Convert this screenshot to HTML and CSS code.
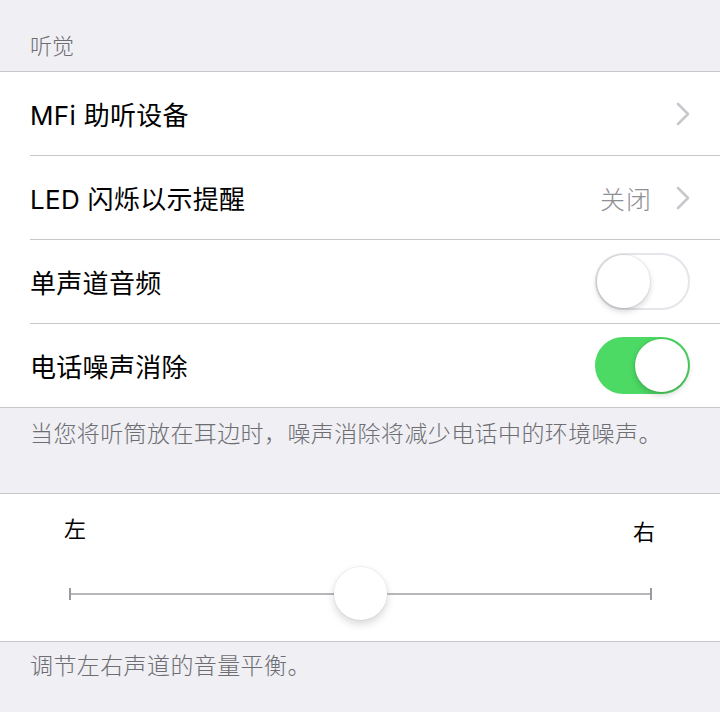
FILE: index.html
```html
<!DOCTYPE html>
<html>
<head>
    <meta charset="utf-8">
    <title>听觉</title>
    <link rel="stylesheet" href="styles.css">
</head>
<body>
    <div class="section-header">听觉</div>

    <div class="group">
        <div class="row">
            <span class="row-title">MFi 助听设备</span>
            <span class="row-detail">
                <svg class="chevron" viewBox="0 0 14 24"><path d="M2 2 L12 12 L2 22" /></svg>
            </span>
        </div>
        <div class="row">
            <span class="row-title">LED 闪烁以示提醒</span>
            <span class="row-detail">
                <span class="row-value">关闭</span>
                <svg class="chevron" viewBox="0 0 14 24"><path d="M2 2 L12 12 L2 22" /></svg>
            </span>
        </div>
        <div class="row">
            <span class="row-title">单声道音频</span>
            <span class="switch"><span class="knob"></span></span>
        </div>
        <div class="row">
            <span class="row-title">电话噪声消除</span>
            <span class="switch on"><span class="knob"></span></span>
        </div>
    </div>

    <div class="section-footer">当您将听筒放在耳边时，噪声消除将减少电话中的环境噪声。</div>

    <div class="group balance">
        <div class="balance-labels">
            <span>左</span>
            <span class="right-label">右</span>
        </div>
        <div class="slider">
            <span class="tick"></span>
            <span class="track"></span>
            <span class="thumb"></span>
            <span class="track"></span>
            <span class="tick"></span>
        </div>
    </div>

    <div class="section-footer last">调节左右声道的音量平衡。</div>
</body>
</html>
```

FILE: styles.css
```css
body {
    margin: 0;
    width: 720px;
    height: 712px;
    overflow: hidden;
    background-color: #efeff4;
    font-family: Inter, "Noto Sans CJK SC", sans-serif;
    color: #000;
}

.section-header {
    font-size: 22px;
    line-height: 28px;
    font-weight: 300;
    color: #6d6d72;
    padding: 32px 30px 11px 30px;
}

.group {
    background-color: #fff;
    border-top: 1px solid #c8c7cc;
    border-bottom: 1px solid #c8c7cc;
}

.row {
    height: 84px;
    box-sizing: border-box;
    margin-left: 30px;
    padding-right: 30px;
    display: flex;
    align-items: center;
    justify-content: space-between;
    border-bottom: 1px solid #c8c7cc;
}

.row:last-child {
    border-bottom: none;
    height: 83px;
}

.row-title {
    font-size: 26px;
    letter-spacing: 0.3px;
}

.row-detail {
    display: flex;
    align-items: center;
    gap: 24px;
}

.row-value {
    font-size: 25px;
    font-weight: 300;
    color: #8e8e93;
    letter-spacing: 1px;
}

.chevron {
    width: 14px;
    height: 24px;
    fill: none;
    stroke: #c7c7cc;
    stroke-width: 2.6;
    stroke-linecap: round;
    stroke-linejoin: round;
}

.switch {
    width: 95px;
    height: 57px;
    box-sizing: border-box;
    border-radius: 29px;
    border: 2px solid #e5e5ea;
    background-color: #fff;
    display: flex;
    align-items: center;
}

.switch .knob {
    width: 53px;
    height: 53px;
    border-radius: 50%;
    background-color: #fff;
    box-shadow: 0 3px 6px rgba(0, 0, 0, 0.18), 0 0 0 1px rgba(0, 0, 0, 0.05);
}

.switch.on {
    background-color: #4cd964;
    border-color: #4cd964;
    justify-content: flex-end;
}

.section-footer {
    font-size: 23px;
    line-height: 28px;
    font-weight: 300;
    color: #6d6d72;
    padding: 12px 30px 45px 30px;
    letter-spacing: 0.4px;
}

.section-footer.last {
    padding-top: 10px;
}

.balance {
    padding: 21px 0 21px 0;
}

.balance-labels {
    display: flex;
    justify-content: space-between;
    padding: 0 65px 0 64px;
    font-size: 22px;
    line-height: 28px;
}

.right-label {
    margin-top: 3px;
}

.slider {
    display: flex;
    align-items: center;
    margin: 21px 68px 0 69px;
    height: 53px;
}

.tick {
    width: 2px;
    height: 12px;
    background-color: #9a9a9f;
}

.track {
    flex: 1;
    height: 2px;
    background-color: #b6b6bb;
}

.thumb {
    width: 53px;
    height: 53px;
    border-radius: 50%;
    background-color: #fff;
    box-shadow: 0 4px 8px rgba(0, 0, 0, 0.16), 0 0 0 1px rgba(0, 0, 0, 0.04);
}
```
